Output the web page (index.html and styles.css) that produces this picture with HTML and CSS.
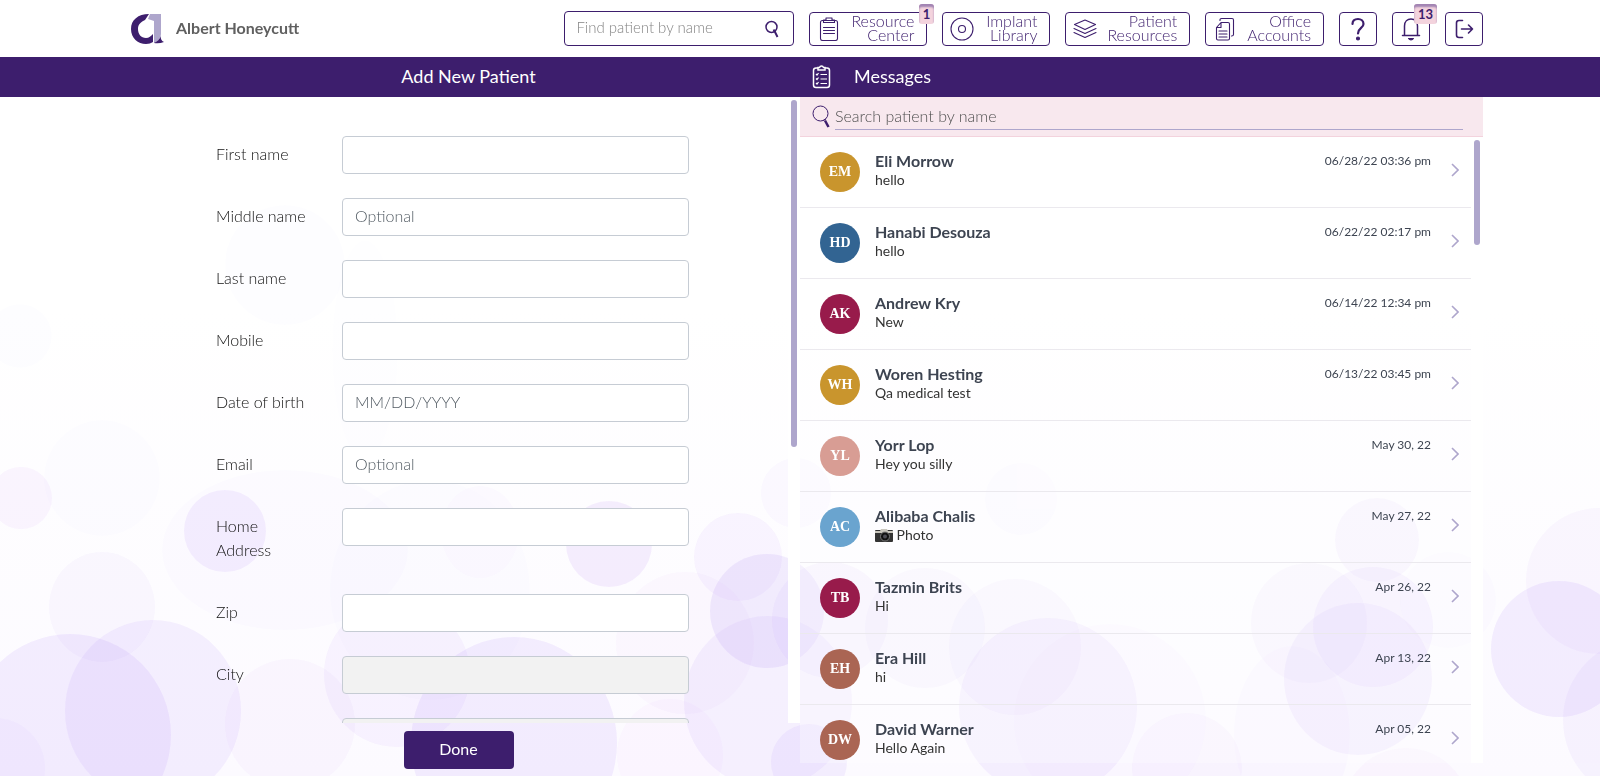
FILE: index.html
```
<!DOCTYPE html>
<html lang="en">
<head>
<meta charset="utf-8">
<title>Add New Patient</title>
<link rel="stylesheet" href="styles.css">
</head>
<body>
<svg class="bubbles" viewBox="0 0 1600 776" preserveAspectRatio="xMidYMax slice" aria-hidden="true">
  <defs><linearGradient id="wash" x2="0" y2="1"><stop offset=".4" stop-color="#fff"/><stop offset="1" stop-color="#fcfaff"/></linearGradient></defs>
  <rect width="1600" height="776" fill="url(#wash)"/>
  <g class="bubble-group" fill="#7a3cf0">
    <circle cx="21" cy="498" r="31" fill="#b04cf0" fill-opacity=".06"/>
    <circle cx="20" cy="336" r="32" fill-opacity=".01"/>
    <circle cx="102" cy="478" r="58" fill-opacity=".01"/>
    <circle cx="225" cy="531" r="41" fill-opacity=".085"/>
    <ellipse cx="102" cy="607" rx="53" ry="55" fill-opacity=".035"/>
    <circle cx="70" cy="735" r="101" fill-opacity=".09"/>
    <ellipse cx="153" cy="711" rx="88" ry="91" fill-opacity=".08"/>
    <circle cx="-5" cy="768" r="50" fill-opacity=".03"/>
    <circle cx="290" cy="724" r="65" fill="#a04cf0" fill-opacity=".04"/>
    <circle cx="397" cy="674" r="73" fill-opacity=".055"/>
    <ellipse cx="514" cy="743" rx="103" ry="106" fill-opacity=".09"/>
    <ellipse cx="480" cy="532" rx="39" ry="46" fill="#b04cf0" fill-opacity=".025"/>
    <ellipse cx="285" cy="550" rx="123" ry="80" fill-opacity=".015"/>
    <ellipse cx="430" cy="590" rx="100" ry="110" fill-opacity=".012"/>
    <ellipse cx="285" cy="265" rx="60" ry="60" fill-opacity=".012"/>
    <ellipse cx="365" cy="350" rx="33" ry="110" fill-opacity=".008"/>
    <circle cx="609" cy="544" r="43" fill="#9040f0" fill-opacity=".1"/>
    <circle cx="738" cy="557" r="44" fill-opacity=".055"/>
    <circle cx="767" cy="611" r="57" fill-opacity=".1"/>
    <circle cx="796" cy="493" r="35" fill-opacity=".03"/>
    <ellipse cx="768" cy="702" rx="84" ry="86" fill-opacity=".065"/>
    <ellipse cx="685" cy="643" rx="69" ry="71" fill="#b04cf0" fill-opacity=".035"/>
    <circle cx="809" cy="762" r="38" fill-opacity=".08"/>
    <ellipse cx="670" cy="755" rx="53" ry="56" fill="#b04cf0" fill-opacity=".03"/>
    <circle cx="830" cy="620" r="58" fill-opacity=".05"/>
    <circle cx="925" cy="628" r="60" fill-opacity=".045"/>
    <ellipse cx="1015" cy="647" rx="66" ry="68" fill-opacity=".045"/>
    <circle cx="1048" cy="707" r="89" fill-opacity=".07"/>
    <circle cx="1021" cy="499" r="36" fill-opacity=".02"/>
    <circle cx="1110" cy="720" r="96" fill="#b04cf0" fill-opacity=".02"/>
    <circle cx="1187" cy="768" r="55" fill-opacity=".04"/>
    <ellipse cx="1292" cy="734" rx="58" ry="88" fill-opacity=".025"/>
    <circle cx="1377" cy="540" r="42" fill-opacity=".05"/>
    <ellipse cx="1309" cy="623" rx="58" ry="60" fill-opacity=".045"/>
    <circle cx="1373" cy="627" r="60" fill-opacity=".07"/>
    <ellipse cx="1358" cy="679" rx="74" ry="76" fill-opacity=".08"/>
    <circle cx="1406" cy="812" r="64" fill="#b04cf0" fill-opacity=".04"/>
    <circle cx="1559" cy="649" r="68" fill-opacity=".09"/>
    <circle cx="1599" cy="581" r="73" fill-opacity=".04"/>
    <circle cx="1645" cy="720" r="82" fill-opacity=".05"/>
    <circle cx="1448" cy="600" r="48" fill-opacity=".015"/>
  </g>
</svg>

<svg class="sprite" aria-hidden="true">
  <symbol id="chevron" viewBox="0 0 8 14"><path d="M1 1L7 7L1 13" fill="none" stroke="#aea6cc" stroke-width="1.600"/></symbol>
</svg>

<header class="topbar">
  <a class="brand" href="#">
    <svg class="brand-logo" viewBox="0 0 33 30" aria-hidden="true">
      <path fill="#aea6cc" d="M19 0H30V20Q30 25 24 29H23V7L17 5Z"/>
      <path fill="#3d1e6d" d="M18 0C7 0 0 6 0 15C0 24 7 30 15 30C18 30 20 29 22 28V20C20 22 18 24 15 24C10 24 7 20 7 15C7 10 10 8 14 6Z"/>
      <path fill="#3d1e6d" d="M30 22Q29 26 33 28Q28 30 23 29Q28 27 30 22Z"/>
    </svg>
    <span>Albert Honeycutt</span>
  </a>
  <nav class="tools">
    <label class="find">
      <input class="find-input" type="text" placeholder="Find patient by name" aria-label="Find patient by name">
      <svg class="find-icon" viewBox="0 0 16 18" aria-hidden="true"><circle cx="7.500" cy="7" r="5.500"/><path d="M9 10.500L11 10"/><path stroke-width="2" d="M10.500 11L13.500 17"/></svg>
    </label>
    <button class="tool" type="button">
      <svg class="tool-icon" viewBox="0 0 24 24"><rect x="3.500" y="3.500" width="17" height="20" rx="2"/><path d="M6.500 5.500V3H9V1H15V3H17.500V5.500ZM6.500 10.500H17.500M6.500 13.500H17.500M6.500 16.500H17.500"/></svg>
      <span>Resource<br>Center</span><b class="badge">1</b>
    </button>
    <button class="tool" type="button">
      <svg class="tool-icon" viewBox="0 0 24 24"><circle cx="12" cy="12" r="11"/><circle cx="12" cy="12" r="3.500"/></svg>
      <span>Implant<br>Library</span>
    </button>
    <button class="tool" type="button">
      <svg class="tool-icon" viewBox="0 0 24 24"><path d="M1.500 7.500L12 3L22.500 7.500L12 12.500ZM1 11.500L12 16.500L23 11.500M1 15.500L12 20.500L23 15.500"/></svg>
      <span>Patient<br>Resources</span>
    </button>
    <button class="tool" type="button">
      <svg class="tool-icon" viewBox="0 0 24 24"><path d="M8 5.500H15Q16.500 5.500 16.500 7V21.500Q16.500 23 15 23H5Q3.500 23 3.500 21.500V10.500ZM8 5.500V10.500H3.500M6 14H14M6 17H14M6 20H14M7 3.500V2.500Q7 1.500 8.500 1.500H19Q20.500 1.500 20.500 3V17.500Q20.500 19 18.500 19"/></svg>
      <span>Office<br>Accounts</span>
    </button>
    <button class="tool square" type="button" aria-label="Help">
      <svg class="tool-icon" viewBox="0 0 24 24"><path stroke-width="2.200" d="M6.500 7C6.500 3.500 9 2 12 2S17.500 4 17.500 7C17.500 11 12 11 12 16.500"/><circle class="solid" cx="12" cy="21.500" r="1.500"/></svg>
    </button>
    <button class="tool square" type="button" aria-label="Notifications">
      <svg class="tool-icon" viewBox="0 0 24 24"><path stroke-width="1.500" d="M3.500 18.500H5.500V9C5.500 4.500 8.500 2 12 2S18.500 4.500 18.500 9V18.500H20.500Z"/><path class="solid" d="M9.500 21.500H14.500Q13.500 23 12 23T9.500 21.500Z"/></svg>
      <b class="badge">13</b>
    </button>
    <button class="tool square" type="button" aria-label="Log out">
      <svg class="tool-icon" viewBox="0 0 24 24"><path stroke-width="1.600" d="M10.500 3.500H7Q4.500 3.500 4.500 6V18Q4.500 20.500 7 20.500H10.500M9.500 12H20.500M16.500 8L20.500 12L16.500 16"/></svg>
    </button>
  </nav>
</header>

<div class="titlebar">
  <h1 class="title-left">Add New Patient</h1>
  <h2 class="title-right">
    <svg class="title-icon" viewBox="0 0 20 24" aria-hidden="true"><rect x="1.500" y="3" width="16" height="19.500" rx="2.500"/><path class="lid" d="M6 5V2.500H7.500Q8 1 9.500 1T11.500 2.500H13V5Z"/><path stroke-width="1.200" d="M4 9L5 10L6.500 8M4 13.500L5 14.500L6.500 12.500M4 18L5 19L6.500 17M8.500 9.500H15M8.500 14H15M8.500 18.500H15"/></svg>
    <span>Messages</span>
  </h2>
</div>

<main class="panes">
  <form class="pane-form">
    <div class="form-scroll">
      <div class="fields">
        <label for="first">First name</label><input id="first" type="text">
        <label for="middle">Middle name</label><input id="middle" type="text" placeholder="Optional">
        <label for="last">Last name</label><input id="last" type="text">
        <label for="mobile">Mobile</label><input id="mobile" type="text">
        <label for="dob">Date of birth</label><input id="dob" type="text" placeholder="MM/DD/YYYY">
        <label for="email">Email</label><input id="email" type="text" placeholder="Optional">
        <label for="address">Home<br>Address</label><input id="address" type="text">
        <label for="zip">Zip</label><input id="zip" type="text">
        <label for="city">City</label><input id="city" type="text" disabled>
        <span></span><input type="text" aria-label="State" disabled>
      </div>
      <div class="track"><div class="thumb thumb-form"></div></div>
    </div>
    <div class="form-actions"><button class="done" type="button">Done</button></div>
  </form>

  <section class="pane-messages">
    <label class="message-search">
      <svg class="message-search-icon" viewBox="0 0 19 23" aria-hidden="true"><circle cx="8.500" cy="8.500" r="7.500"/><path d="M11 15.500L14 14"/><path class="handle" d="M13 15.500L16.500 22"/></svg>
      <input type="text" placeholder="Search patient by name" aria-label="Search patient by name">
    </label>
    <div class="message-scroll">
      <ul class="messages">
        <li><span class="avatar gold">EM</span><div class="text"><strong>Eli Morrow</strong><p>hello</p></div><time>06/28/22 03:36 pm</time><svg class="chevron"><use href="#chevron"/></svg></li>
        <li><span class="avatar blue">HD</span><div class="text"><strong>Hanabi Desouza</strong><p>hello</p></div><time>06/22/22 02:17 pm</time><svg class="chevron"><use href="#chevron"/></svg></li>
        <li><span class="avatar wine">AK</span><div class="text"><strong>Andrew Kry</strong><p>New</p></div><time>06/14/22 12:34 pm</time><svg class="chevron"><use href="#chevron"/></svg></li>
        <li><span class="avatar gold">WH</span><div class="text"><strong>Woren Hesting</strong><p>Qa medical test</p></div><time>06/13/22 03:45 pm</time><svg class="chevron"><use href="#chevron"/></svg></li>
        <li><span class="avatar rose">YL</span><div class="text"><strong>Yorr Lop</strong><p>Hey you silly</p></div><time>May 30, 22</time><svg class="chevron"><use href="#chevron"/></svg></li>
        <li><span class="avatar sky">AC</span><div class="text"><strong>Alibaba Chalis</strong><p><svg class="camera" viewBox="0 0 18 13" aria-hidden="true"><rect y="1" width="18" height="12" rx="1" fill="#333"/><path fill="#c9c6bd" d="M0 2H5L6 0H12L13 2H18V4H0Z"/><circle cx="10" cy="7.500" r="4.500" fill="#111" stroke="#777"/><circle cx="10" cy="7.500" r="2" fill="#4d4d55"/></svg> Photo</p></div><time>May 27, 22</time><svg class="chevron"><use href="#chevron"/></svg></li>
        <li><span class="avatar wine">TB</span><div class="text"><strong>Tazmin Brits</strong><p>Hi</p></div><time>Apr 26, 22</time><svg class="chevron"><use href="#chevron"/></svg></li>
        <li><span class="avatar clay">EH</span><div class="text"><strong>Era Hill</strong><p>hi</p></div><time>Apr 13, 22</time><svg class="chevron"><use href="#chevron"/></svg></li>
        <li><span class="avatar clay">DW</span><div class="text"><strong>David Warner</strong><p>Hello Again</p></div><time>Apr 05, 22</time><svg class="chevron"><use href="#chevron"/></svg></li>
      </ul>
      <div class="track"><div class="thumb thumb-messages"></div></div>
    </div>
  </section>
</main>
</body>
</html>
```

FILE: styles.css
```
* { box-sizing: border-box; }

:root {
  --purple: #3d1e6d;
  --lavender: #aea6cc;
  --gutter: 117px;
}

body {
  margin: 0;
  height: 100vh;
  display: flex;
  flex-direction: column;
  overflow: hidden;
  background: #fff;
  color: #111;
  font: 300 16px/24px Lato, "Open Sans", sans-serif;
}

h1, h2, p, ul { margin: 0; padding: 0; }

input, button { font: inherit; }

.bubbles {
  position: fixed;
  inset: 0;
  z-index: -1;
  width: 100%;
  height: 100%;
}

.bubble-group { opacity: .85; }

.sprite { display: none; }

/* Top bar */
.topbar {
  display: flex;
  align-items: center;
  justify-content: space-between;
  height: 57px;
  padding: 0 var(--gutter) 0 131px;
}

.brand {
  display: flex;
  align-items: center;
  gap: 12px;
  color: #606060;
  font-weight: 700;
  text-decoration: none;
}

.brand span { padding-bottom: 2px; }

.brand-logo { width: 33px; height: 30px; }

.tools { display: flex; align-items: center; gap: 15px; }

.find {
  display: flex;
  align-items: center;
  width: 230px;
  height: 35px;
  padding: 0 13px 0 11px;
  border: 1px solid var(--purple);
  border-radius: 4px;
  background: #fff;
}

.find-input {
  flex: 1;
  min-width: 0;
  padding: 0 0 4px;
  border: 0;
  outline: 0;
  background: none;
  font-size: 15px;
}

.find-input::placeholder { color: #858585; }

.find-icon {
  width: 16px;
  height: 18px;
  fill: none;
  stroke: var(--purple);
  stroke-width: 1.5;
}

.tool {
  position: relative;
  display: flex;
  align-items: center;
  justify-content: space-between;
  gap: 10px;
  min-width: 108px;
  height: 34px;
  padding: 0 12px 0 7px;
  border: 1px solid var(--purple);
  border-radius: 4px;
  background: #fff;
  color: var(--purple);
  line-height: 14px;
  text-align: right;
}

.tool > span { padding-bottom: 2px; }

.tool.square { justify-content: center; min-width: 0; width: 38px; padding: 0; }

.tool-icon {
  width: 24px;
  height: 24px;
  fill: none;
  stroke: currentColor;
  stroke-width: 1.1;
  stroke-linecap: round;
  stroke-linejoin: round;
}

.solid { fill: currentColor; }

.badge {
  position: absolute;
  top: -9px;
  right: -8px;
  padding: 2px 4px;
  border-radius: 3px;
  background: #f3d3dd;
  box-shadow: inset 0 3px 2px #a183b2;
  font-size: 13px;
  font-weight: 700;
  line-height: 16px;
}

/* Title bar */
.titlebar {
  display: grid;
  grid-template-columns: 1fr 1fr;
  align-items: center;
  height: 40px;
  padding: 0 var(--gutter);
  background: var(--purple);
  color: #fff;
}

.titlebar h1, .titlebar h2 { font-size: 18px; font-weight: 400; }

.title-left { padding: 0 0 2px 20px; text-align: center; }

.title-right { display: flex; align-items: center; gap: 22px; padding-left: 12px; }

.title-right span { padding-bottom: 2px; }

.title-icon {
  width: 20px;
  height: 24px;
  fill: none;
  stroke: #fff;
  stroke-width: 1.5;
}

.lid { fill: var(--purple); }

/* Panes */
.panes {
  flex: 1;
  min-height: 0;
  display: grid;
  grid-template-columns: 1fr 1fr;
  grid-template-rows: minmax(0, 1fr);
  padding: 0 var(--gutter);
}

.track {
  position: absolute;
  top: 0;
  right: 0;
  bottom: 0;
  width: 12px;
  padding: 3px;
  background: #fff;
}

.thumb { width: 6px; border-radius: 3px; background: var(--lavender); }

.thumb-form { height: 56%; }

.thumb-messages { height: 17%; }

.pane-form { display: flex; flex-direction: column; min-height: 0; }

.form-scroll {
  position: relative;
  flex: 1;
  min-height: 0;
  overflow: hidden;
}

.fields {
  display: grid;
  grid-template-columns: 126px 1fr;
  align-items: start;
  row-gap: 24px;
  padding: 39px 111px 0 99px;
}

.fields label { padding: 6px 0 8px; }

.fields input {
  width: 100%;
  height: 38px;
  padding: 5px 12px 8px;
  border: 1px solid #c6ccd4;
  border-radius: 4px;
  background: #fff;
}

.fields input:disabled { background: #f2f2f2; }

.fields input::placeholder { color: #525b63; }

.form-actions { display: flex; justify-content: center; padding: 8px 0 7px; }

.done {
  width: 110px;
  height: 38px;
  padding: 0 0 2px;
  border: 0;
  border-radius: 4px;
  background: var(--purple);
  color: #fff;
  font-weight: 400;
}

/* Messages */
.pane-messages {
  display: flex;
  flex-direction: column;
  min-height: 0;
  margin-bottom: 13px;
  background: rgba(255, 255, 255, .3);
}

.message-search {
  display: flex;
  align-items: center;
  gap: 4px;
  height: 40px;
  padding: 0 20px 0 12px;
  border-bottom: 1px solid #f3d3dd;
  background: #f8e8ee;
}

.message-search-icon {
  width: 19px;
  height: 23px;
  fill: none;
  stroke: var(--purple);
  stroke-width: 1;
}

.handle { stroke-width: 2.5; }

.message-search input {
  flex: 1;
  height: 27px;
  padding: 0 0 2px;
  border: 0;
  border-bottom: 1px solid var(--lavender);
  outline: 0;
  background: none;
}

.message-search input::placeholder { color: #505050; }

.message-scroll { position: relative; flex: 1; min-height: 0; overflow: hidden; }

.messages { margin-right: 12px; list-style: none; }

.messages li {
  display: flex;
  height: 71px;
  padding: 15px 12px 0 20px;
  border-bottom: 1px solid #ebe9ee;
  color: #3d4451;
}

.avatar {
  width: 40px;
  height: 40px;
  border-radius: 50%;
  color: #fff;
  font: 700 14px/40px "Liberation Serif", serif;
  text-align: center;
}

.gold { background: #c9952d; }
.blue { background: #326492; }
.wine { background: #981b4b; }
.rose { background: #d89d94; }
.sky { background: #6aa4cf; }
.clay { background: #aa6553; }

.text { flex: 1; padding-left: 15px; }

.text strong { display: block; font-weight: 700; line-height: 18px; }

.text p { color: #333; font-size: 14px; font-weight: 400; line-height: 20px; }

.camera { width: 18px; height: 13px; vertical-align: -2px; }

.messages time { font-size: 12px; font-weight: 400; line-height: 18px; }

.chevron { width: 8px; height: 14px; margin: 11px 0 0 20px; }
```
